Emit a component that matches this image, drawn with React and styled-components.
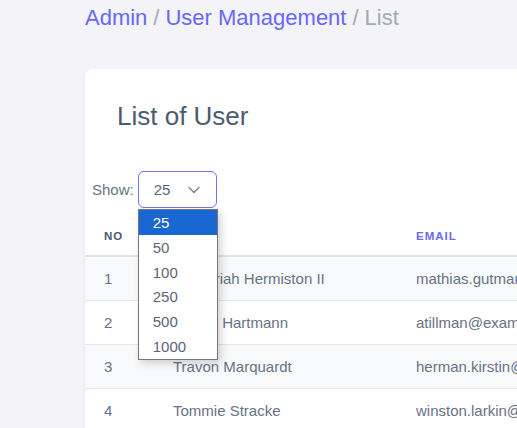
import React from 'react';
import styled, { createGlobalStyle } from 'styled-components';

const GlobalStyle = createGlobalStyle`
  html, body {
    margin: 0;
    padding: 0;
    background: #f3f3f8;
    overflow: hidden;
    font-family: 'Liberation Sans', Arial, sans-serif;
  }
`;

const Page = styled.div`
  width: 517px;
  height: 428px;
  padding: 6px 0 0 85px;
  box-sizing: border-box;
  overflow: hidden;
`;

const Breadcrumb = styled.nav`
  font-size: 22px;
  line-height: 24px;
  color: #a3aab7;
  white-space: nowrap;
`;

const Crumb = styled.span`
  color: ${p => (p.active ? '#a3aab7' : '#6868f5')};
`;

const Sep = styled.span`
  color: #a3aab7;
  margin: 0 6px;
`;

const Card = styled.section`
  margin-top: 39px;
  width: 620px;
  height: 400px;
  background: #fff;
  border-radius: 7px;
  box-shadow: 0 1px 4px rgba(30, 40, 80, 0.05);
  padding-top: 32px;
  box-sizing: border-box;
`;

const Title = styled.h1`
  margin: 0 0 40px 32px;
  font-size: 26px;
  line-height: 30px;
  font-weight: 400;
  color: #4b5b72;
`;

const Toolbar = styled.div`
  display: flex;
  align-items: center;
  gap: 4px;
  padding-left: 7px;
  font-size: 15px;
  color: #6b7585;
`;

const SelectWrap = styled.div`
  position: relative;
`;

const SelectBox = styled.div`
  width: 79px;
  height: 37px;
  box-sizing: border-box;
  border: 1px solid #7272f6;
  border-radius: 6px;
  display: flex;
  align-items: center;
  justify-content: space-between;
  padding: 0 16px 0 15px;
  color: #5b6678;
  font-size: 15px;
  background: #fff;
`;

const Menu = styled.ul`
  position: absolute;
  top: 38px;
  left: 0;
  width: 80px;
  margin: 0;
  padding: 0;
  list-style: none;
  background: #fff;
  border: 1px solid #767676;
  box-sizing: border-box;
  box-shadow: 3px 3px 8px rgba(0, 0, 0, 0.18);
  z-index: 5;
`;

const Option = styled.li`
  height: 24.8px;
  line-height: 25px;
  padding-left: 14px;
  font-size: 15px;
  color: ${p => (p.selected ? '#fff' : '#5b6678')};
  background: ${p => (p.selected ? '#1967d2' : '#fff')};
`;

const Table = styled.div`
  margin-top: 8px;
`;

const Row = styled.div`
  display: grid;
  grid-template-columns: 69px 243px 1fr;
  height: ${p => (p.head ? '39px' : '43px')};
  align-items: center;
  border-bottom: ${p => (p.head ? '2px solid #dfe3e8' : '1px solid #e3e6ea')};
  background: ${p => (p.striped ? '#f8f9fb' : '#fff')};
`;

const HeadCell = styled.div`
  padding-left: 19px;
  font-size: 11.5px;
  font-weight: 700;
  letter-spacing: 1px;
  color: ${p => (p.accent ? '#6a6af5' : '#4e5a6b')};
  white-space: nowrap;
`;

const Cell = styled.div`
  padding-left: 19px;
  font-size: 15px;
  color: #677285;
  white-space: nowrap;
`;

const Chevron = () => (
  <svg width="12" height="8" viewBox="0 0 12 8" fill="none">
    <path d="M1 1.5l5 5 5-5" stroke="#7b8494" strokeWidth="1.4" strokeLinecap="round" strokeLinejoin="round" />
  </svg>
);

const users = [
  { no: 1, name: 'Zachariah Hermiston II', email: 'mathias.gutmann@example.org' },
  { no: 2, name: 'Hunter Hartmann', email: 'atillman@example.com' },
  { no: 3, name: 'Travon Marquardt', email: 'herman.kirstin@example.net' },
  { no: 4, name: 'Tommie Stracke', email: 'winston.larkin@example.com' },
];

const sizes = [25, 50, 100, 250, 500, 1000];

export default function App() {
  return (
    <>
      <GlobalStyle />
      <Page>
        <Breadcrumb>
          <Crumb>Admin</Crumb>
          <Sep>/</Sep>
          <Crumb>User Management</Crumb>
          <Sep>/</Sep>
          <Crumb active>List</Crumb>
        </Breadcrumb>
        <Card>
          <Title>List of User</Title>
          <Toolbar>
            <span>Show:</span>
            <SelectWrap>
              <SelectBox>
                <span>25</span>
                <Chevron />
              </SelectBox>
              <Menu>
                {sizes.map(s => (
                  <Option key={s} selected={s === 25}>{s}</Option>
                ))}
              </Menu>
            </SelectWrap>
          </Toolbar>
          <Table>
            <Row head>
              <HeadCell>NO</HeadCell>
              <HeadCell>NAME</HeadCell>
              <HeadCell accent>EMAIL</HeadCell>
            </Row>
            {users.map((u, i) => (
              <Row key={u.no} striped={i % 2 === 0}>
                <Cell>{u.no}</Cell>
                <Cell>{u.name}</Cell>
                <Cell>{u.email}</Cell>
              </Row>
            ))}
          </Table>
        </Card>
      </Page>
    </>
  );
}
